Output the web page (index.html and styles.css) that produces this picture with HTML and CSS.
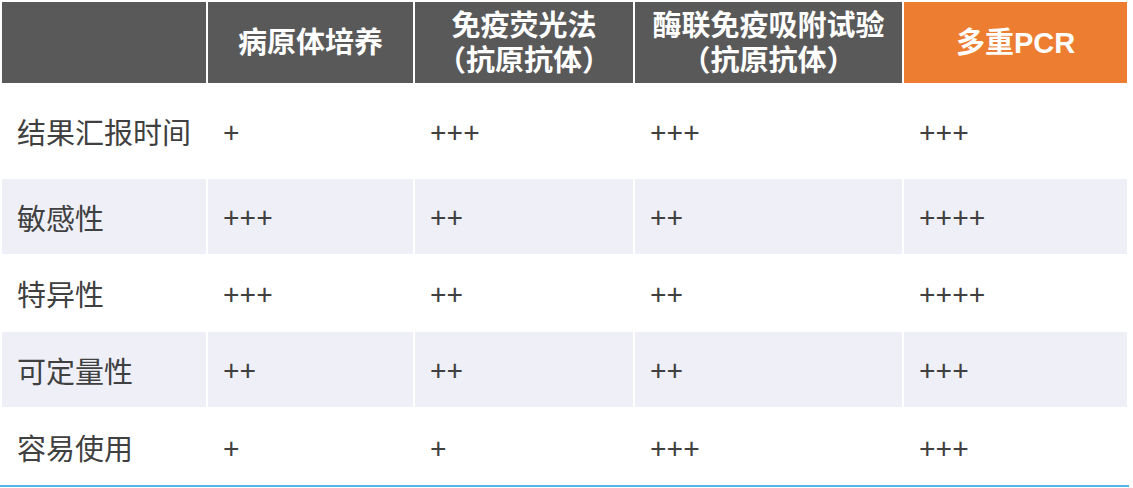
FILE: index.html
```html
<!DOCTYPE html>
<html lang="zh-CN">
<head>
<meta charset="utf-8">
<link rel="stylesheet" href="styles.css">
</head>
<body>
<div class="table">
  <div class="hd"></div>
  <div class="hd">病原体培养</div>
  <div class="hd">免疫荧光法<br>（抗原抗体）</div>
  <div class="hd">酶联免疫吸附试验<br>（抗原抗体）</div>
  <div class="hd hd-accent">多重PCR</div>

  <div class="cell">结果汇报时间</div>
  <div class="cell">+</div>
  <div class="cell">+++</div>
  <div class="cell">+++</div>
  <div class="cell">+++</div>

  <div class="cell shade">敏感性</div>
  <div class="cell shade">+++</div>
  <div class="cell shade">++</div>
  <div class="cell shade">++</div>
  <div class="cell shade">++++</div>

  <div class="cell">特异性</div>
  <div class="cell">+++</div>
  <div class="cell">++</div>
  <div class="cell">++</div>
  <div class="cell">++++</div>

  <div class="cell shade">可定量性</div>
  <div class="cell shade">++</div>
  <div class="cell shade">++</div>
  <div class="cell shade">++</div>
  <div class="cell shade">+++</div>

  <div class="cell">容易使用</div>
  <div class="cell">+</div>
  <div class="cell">+</div>
  <div class="cell">+++</div>
  <div class="cell">+++</div>
</div>
</body>
</html>
```

FILE: styles.css
```css
html, body {
  margin: 0;
  padding: 0;
  background: #ffffff;
}

.table {
  width: 1125px;
  padding: 2px 2px 0 2px;
  display: grid;
  grid-template-columns: 204px 205px 218px 267px 223px;
  grid-template-rows: 81px 92px 75px 74px 75px 76px;
  gap: 2px;
  border-bottom: 2px solid #56b3e8;
  font-family: "Noto Sans", "Noto Sans CJK SC", sans-serif;
}

.hd {
  background: #595959;
  color: #ffffff;
  font-family: "Liberation Sans", "Noto Sans CJK SC", sans-serif;
  font-weight: 700;
  font-size: 29px;
  line-height: 35px;
  display: flex;
  align-items: center;
  justify-content: center;
  text-align: center;
  padding-top: 2px;
}

.hd-accent {
  background: #ed7d31;
}

.cell {
  color: #404040;
  font-size: 29px;
  display: flex;
  align-items: center;
  padding-left: 15px;
  background: #ffffff;
}

.shade {
  background: #eeeff7;
}
```
